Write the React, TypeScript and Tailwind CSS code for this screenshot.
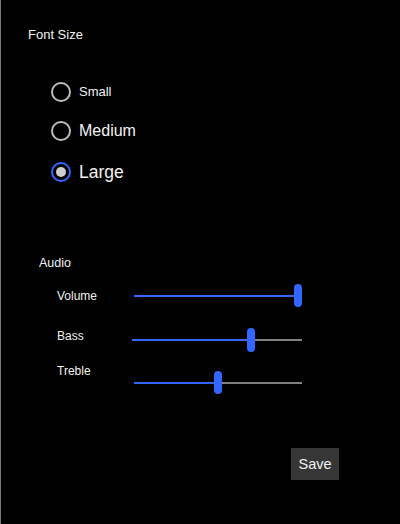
import React from "react";

function Radio({ label, checked, size }: { label: string; checked?: boolean; size: string }) {
  return (
    <div className="flex items-center h-[20px]">
      <div
        className={
          "w-[20px] h-[20px] rounded-full border-2 flex items-center justify-center shrink-0 " +
          (checked ? "border-[#3366ff]" : "border-[#bdbdbd]")
        }
      >
        {checked && <div className="w-[10px] h-[10px] rounded-full bg-[#cfcfcf]" />}
      </div>
      <span className={"ml-[8px] text-[#f2f2f2] leading-[20px] " + size}>{label}</span>
    </div>
  );
}

function Slider({ width, pct, h }: { width: number; pct: number; h: number }) {
  const thumbW = 8;
  const x = (width - thumbW) * pct;
  return (
    <div className="relative" style={{ width, height: h }}>
      <div className="absolute left-0 right-0 top-1/2 -translate-y-1/2 h-[2px] bg-[#7f7f7f]" />
      <div
        className="absolute left-0 top-1/2 -translate-y-1/2 h-[2px] bg-[#3366ff]"
        style={{ width: x + thumbW / 2 }}
      />
      <div
        className="absolute top-0 bottom-0 w-[8px] rounded-full bg-[#3366ff]"
        style={{ left: x }}
      />
    </div>
  );
}

export default function App() {
  return (
    <div
      className="w-[400px] h-[524px] bg-black border-l border-[#777777] text-[#f2f2f2] overflow-hidden"
      style={{ fontFamily: '"Liberation Sans", Arial, sans-serif' }}
    >
      <div className="pt-[27px] pl-[27px] text-[13px] leading-[16px]">Font Size</div>
      <div className="pl-[50px] mt-[39px] flex flex-col">
        <Radio label="Small" size="text-[13px]" />
        <div className="mt-[19px]">
          <Radio label="Medium" size="text-[16px]" />
        </div>
        <div className="mt-[21px]">
          <Radio label="Large" checked size="text-[17.5px]" />
        </div>
      </div>

      <div className="mt-[73px] pl-[38px] text-[12.5px] leading-[16px]">Audio</div>

      <div className="pl-[56px] mt-[13px] text-[12px] leading-[16px]">
        <div className="flex items-start">
          <div className="w-[77px] mt-[4px]">Volume</div>
          <div>
            <Slider width={168} pct={1} h={23} />
          </div>
        </div>
        <div className="flex items-start mt-[17px]">
          <div className="w-[75px] mt-[4px]">Bass</div>
          <div className="mt-[4px]">
            <Slider width={170} pct={0.71} h={24} />
          </div>
        </div>
        <div className="flex items-start mt-[10px]">
          <div className="w-[77px] mt-[1px]">Treble</div>
          <div className="mt-[9px]">
            <Slider width={168} pct={0.5} h={23} />
          </div>
        </div>
      </div>

      <div className="flex justify-end pr-[61px] mt-[54px]">
        <button className="w-[48px] h-[32px] bg-[#363636] text-[#f2f2f2] text-[14.5px] leading-[32px] text-center">
          Save
        </button>
      </div>
    </div>
  );
}
